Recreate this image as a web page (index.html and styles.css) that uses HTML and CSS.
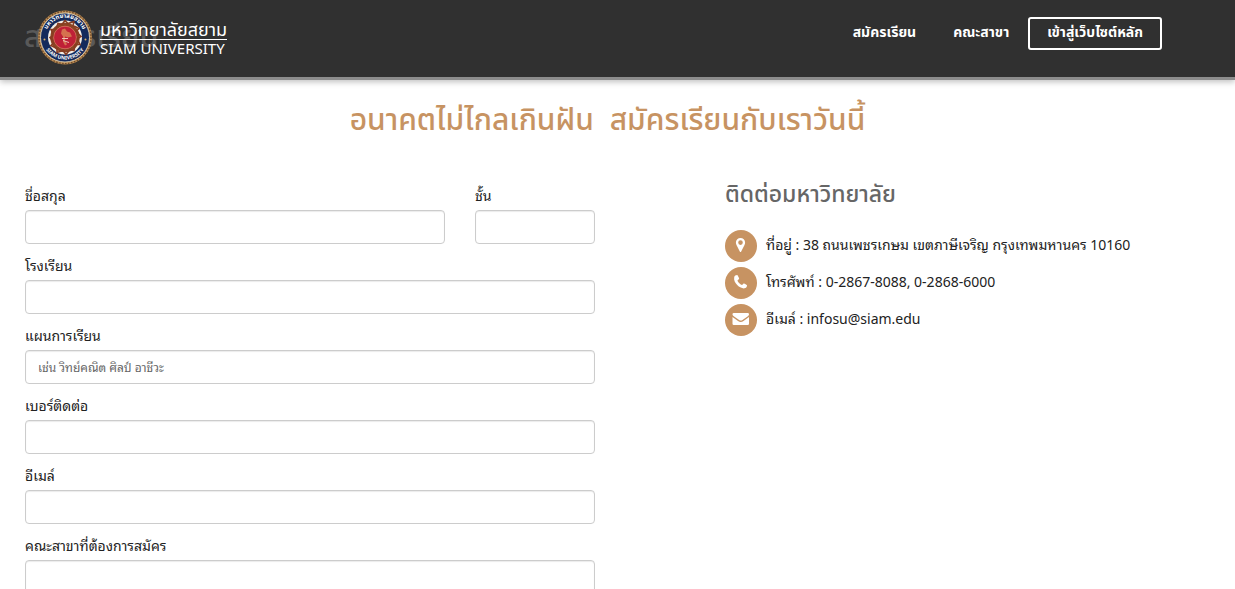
FILE: index.html
```html
<!DOCTYPE html>
<html lang="th">
<head>
<meta charset="utf-8">
<meta name="viewport" content="width=device-width, initial-scale=1">
<title>สมัครเรียน</title>
<link rel="stylesheet" href="styles.css">
</head>
<body>
<header class="site-header">
  <span class="page-name">สมัครเรียน</span>
  <a class="brand" href="#">
    <svg class="seal" viewBox="0 0 56 56" aria-hidden="true">
      <defs>
        <path id="arc-top" d="M9 31A19.3 19.3 0 1 1 47 31"/>
        <path id="arc-bottom" d="M5.500 31A22.800 22.800 0 0 0 50.500 31"/>
      </defs>
      <circle cx="28" cy="28" r="27" fill="#b98a52"/>
      <circle cx="28" cy="28" r="26" fill="none" stroke="#6d4a2c" stroke-width="1.400" stroke-dasharray="1.500 1.500"/>
      <circle cx="28" cy="28" r="24.500" fill="#142a5c" stroke="#f0dfbd" stroke-width=".8"/>
      <circle cx="28" cy="28" r="17" fill="#f3eee6"/>
      <circle cx="28" cy="28" r="13" fill="none" stroke="#8b4423" stroke-width="3.500"/>
      <path d="M28 11l3 3 6-2-1 4 6 3-3 3 5 5-4 2 3 6-5 0-1 6-4-1-4 5-3-4-6 2 0-4-6-3 3-3-4-5 4-2-3-6 5 0 2-6 4 1z" fill="none" stroke="#873c21" stroke-width="1.600"/>
      <circle cx="28" cy="28" r="11.300" fill="#bf2037" stroke="#d66b52" stroke-width=".7"/>
      <path d="M25 20l3-1 2 3 3 1 2 4-4 1-3-1 0 4 2 4-2 1-2-4 0-5-2-3z" fill="#d5724e"/>
      <path d="M25 29h6M26 31l6 2" stroke="#efc2b8" stroke-width="1"/>
      <circle cx="7.500" cy="30" r="1" fill="#d9b36c"/>
      <circle cx="48.500" cy="30" r="1" fill="#d9b36c"/>
      <text class="seal-text seal-thai"><textPath href="#arc-top" startOffset="50%" text-anchor="middle">มหาวิทยาลัยสยาม</textPath></text>
      <text class="seal-text"><textPath href="#arc-bottom" startOffset="50%" text-anchor="middle">SIAM UNIVERSITY</textPath></text>
    </svg>
    <span class="brand-text">
      <span class="brand-thai">มหาวิทยาลัยสยาม</span>
      <span class="brand-latin">SIAM UNIVERSITY</span>
    </span>
  </a>
  <nav class="menu">
    <a class="menu-link" href="#">สมัครเรียน</a>
    <a class="menu-link" href="#">คณะสาขา</a>
    <a class="menu-link menu-button" href="#">เข้าสู่เว็บไซต์หลัก</a>
  </nav>
</header>
<main class="page">
  <h1 class="headline">อนาคตไม่ไกลเกินฝัน&nbsp; สมัครเรียนกับเราวันนี้</h1>
  <div class="columns">
    <form class="form">
      <div class="form-row">
        <div class="field"><label class="label" for="name">ชื่อสกุล</label><input class="input" id="name" type="text"></div>
        <div class="field"><label class="label" for="grade">ชั้น</label><input class="input" id="grade" type="text"></div>
      </div>
      <div class="field"><label class="label" for="school">โรงเรียน</label><input class="input" id="school" type="text"></div>
      <div class="field"><label class="label" for="plan">แผนการเรียน</label><input class="input" id="plan" type="text" placeholder="เช่น วิทย์คณิต ศิลป์ อาชีวะ"></div>
      <div class="field"><label class="label" for="phone">เบอร์ติดต่อ</label><input class="input" id="phone" type="tel"></div>
      <div class="field"><label class="label" for="email">อีเมล์</label><input class="input" id="email" type="email"></div>
      <div class="field"><label class="label" for="faculty">คณะสาขาที่ต้องการสมัคร</label><input class="input" id="faculty" type="text"></div>
    </form>
    <section class="contact">
      <h2 class="contact-title">ติดต่อมหาวิทยาลัย</h2>
      <ul class="contact-list">
        <li class="contact-item">
          <svg class="icon" viewBox="0 0 32 32" aria-hidden="true"><circle cx="16" cy="16" r="16" fill="#c79362"/><path fill="#fff" fill-rule="evenodd" d="M15.500 8a4.600 4.600 0 0 0-4.600 4.600c0 1 .2 1.600.6 2.300l3.300 6.600q.7 1 1.400 0l3.300-6.600c.4-.7.6-1.300.6-2.300A4.600 4.600 0 0 0 15.500 8zm0 2.300a2.300 2.300 0 1 1 0 4.600 2.300 2.300 0 0 1 0-4.600z"/></svg>
          <span class="contact-text">ที่อยู่ : 38 ถนนเพชรเกษม เขตภาษีเจริญ กรุงเทพมหานคร 10160</span>
        </li>
        <li class="contact-item">
          <svg class="icon" viewBox="0 0 32 32" aria-hidden="true"><circle cx="16" cy="16" r="16" fill="#c79362"/><path fill="#fff" d="M9.200 10.300c.2-1.400 1.600-2.300 2.900-2.300.5 0 .8.800 1.400 2 .5 1 .9 1.400.5 1.900s-1.500 1.200-1.500 1.700c0 1.200 3.300 4.400 4.500 4.400.5 0 1.200-1.300 1.700-1.500.6-.2 1.300.4 1.900.7 1.200.6 1.400.8 1.400 1.200 0 1.100-.6 2.300-1.700 2.700-1.500.6-3 .3-4.500-.5-3-1.500-4.500-3.200-6-5.800-.7-1.500-.9-3-.6-4.500z"/></svg>
          <span class="contact-text">โทรศัพท์ : 0-2867-8088, 0-2868-6000</span>
        </li>
        <li class="contact-item">
          <svg class="icon" viewBox="0 0 32 32" aria-hidden="true"><circle cx="16" cy="16" r="16" fill="#c79362"/><path fill="#fff" d="M7.500 10.200Q7.500 9 8.800 9h13.900q1.300 0 1.300 1.200c0 1-.7 1.700-1.500 2.300l-5 3.400q-1.700 1.200-3.400 0l-5-3.400c-.8-.6-1.600-1.300-1.600-2.300z"/><path fill="#fff" d="M7.500 13l5.500 4q2.700 2 5.500 0l5.500-4v6.700q0 1.300-1.300 1.300H8.800q-1.300 0-1.300-1.300z"/></svg>
          <span class="contact-text">อีเมล์ : infosu@siam.edu</span>
        </li>
      </ul>
    </section>
  </div>
</main>
</body>
</html>
```
FILE: styles.css
```css
* { box-sizing: border-box; }
body {
  margin: 0;
  background: #fff;
  color: #222;
  font-family: "Noto Sans", "Noto Sans Thai Looped", "Loma", "Garuda", "Noto Sans Thai", sans-serif;
  font-size: 14px;
  line-height: 20px;
}
.site-header,
.headline,
.contact-title { font-family: "Noto Sans", "Noto Sans Thai", sans-serif; }
.site-header {
  position: relative;
  display: flex;
  justify-content: space-between;
  align-items: flex-start;
  padding: 9px 73px 11px 37px;
  background: #303030;
  border-bottom: 3px solid #8c8c8c;
  box-shadow: 0 2px 6px rgba(0, 0, 0, .25);
}
.page-name {
  position: absolute;
  left: 24px;
  top: 11px;
  color: #595959;
  font-size: 31px;
  font-weight: 500;
  line-height: 48px;
}
.brand {
  position: relative;
  display: flex;
  align-items: center;
  gap: 7px;
  color: #fff;
  text-decoration: none;
}
.seal { width: 56px; height: 57px; }
.seal-text {
  fill: #fff;
  font-size: 5px;
  font-weight: 700;
}
.seal-thai { font-size: 6px; }
.brand-text { display: flex; flex-direction: column; }
.brand-thai {
  border-bottom: 1px solid #fff;
  font-size: 18px;
  line-height: 20px;
}
.brand-latin { font-size: 15px; line-height: 17px; }
.menu { display: flex; gap: 19px; padding-top: 8px; }
.menu-link {
  padding: 3px 0 6px;
  border: 2px solid transparent;
  border-width: 2px 0;
  color: #fff;
  font-size: 14px;
  font-weight: 700;
  text-decoration: none;
  white-space: nowrap;
}
.menu-link:first-child { margin-right: 18px; }
.menu-button { padding: 3px 17px 6px; border-width: 2px; border-color: #fff; border-radius: 3px; }
.page { padding: 0 25px; }
.headline {
  margin: 15px 20px 0 0;
  color: #c79362;
  font-size: 30px;
  font-weight: 500;
  line-height: 48px;
  text-align: center;
}
.columns {
  display: grid;
  grid-template-columns: 570fr 485fr;
  column-gap: 130px;
  padding-top: 41px;
}
.form-row { display: grid; grid-template-columns: 420fr 120fr; gap: 30px; }
.field { min-width: 0; margin-bottom: 10px; }
.label { display: block; height: 26px; line-height: 24px; }
.input {
  display: block;
  width: 100%;
  height: 34px;
  padding: 6px 12px;
  border: 1px solid #ccc;
  border-radius: 4px;
  background: #fff;
  box-shadow: inset 0 1px 1px rgba(0, 0, 0, .08);
  color: #555;
  font: inherit;
  font-size: 12px;
}
.input::placeholder { color: #666; }
.contact-title {
  margin: 0 0 28px;
  color: #666;
  font-size: 23px;
  font-weight: 500;
  line-height: 18px;
}
.contact-list { display: grid; gap: 5px; margin: 0; padding: 0; list-style: none; }
.contact-item { display: flex; align-items: flex-start; gap: 9px; white-space: nowrap; }
.contact-text { padding-top: 5px; }
.icon { flex: none; width: 32px; height: 32px; }
```
